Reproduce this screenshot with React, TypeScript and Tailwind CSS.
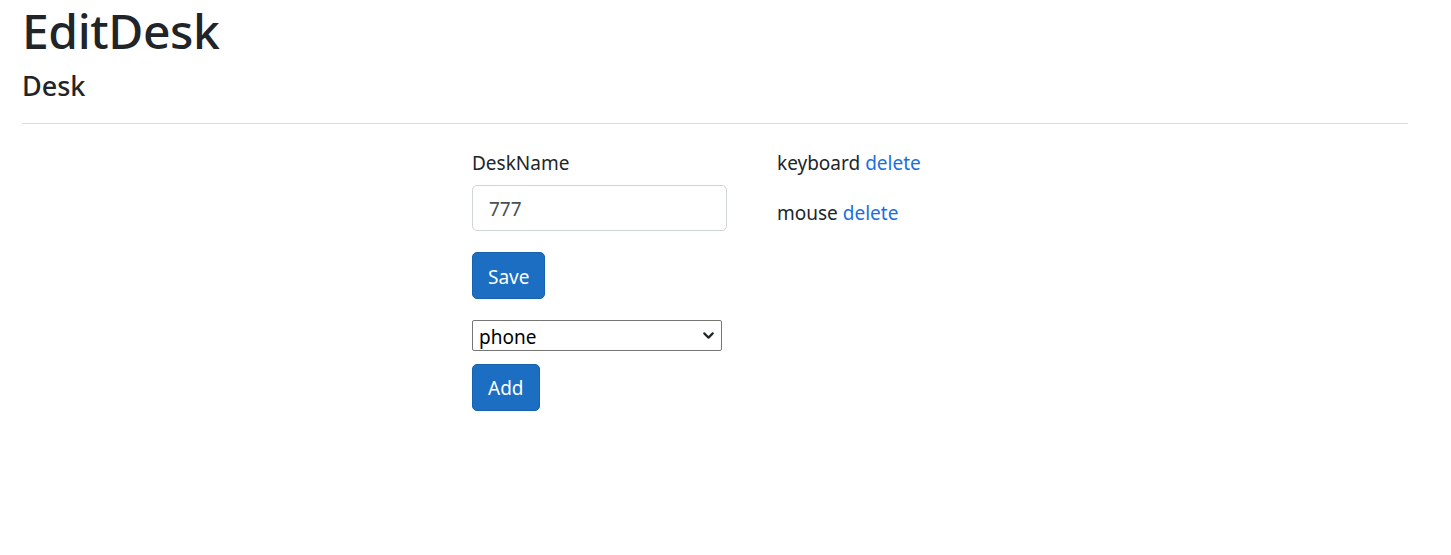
import { ChevronDown } from 'lucide-react';

export default function App() {
  const items = ['keyboard', 'mouse'];

  return (
    <div className="min-h-[555px] bg-white text-[#212529] font-['Noto_Sans',sans-serif]">
      <div className="pl-[22px] pt-[2px] w-[1408px]">
        {/* Header */}
        <h1 className="text-[48px] font-medium leading-[58px] tracking-[-0.4px]">EditDesk</h1>
        <h4 className="mt-[9px] text-[27px] font-medium leading-[34px]">Desk</h4>
        <hr className="mt-[20px] border-t border-[#dcdcdc]" />

        <div className="flex mt-[21px] pl-[450px]">
          {/* Form column */}
          <div className="w-[305px] flex flex-col items-start">
            <label className="text-[19px] leading-[34px] pt-[1px]">DeskName</label>
            <input
              defaultValue="777"
              className="mt-[5px] w-[255px] h-[46px] rounded-[5px] border border-[#ced4da] px-[16px] pt-[2px] text-[19px] text-[#495057] outline-none"
            />
            <button className="mt-[21px] h-[47px] pt-[3px] px-[15px] rounded-[5px] bg-[#1b6ec2] border border-[#1861ac] text-white text-[19px]">
              Save
            </button>
            <div className="relative mt-[21px] w-[250px] h-[31px] border border-[#767676] rounded-[2px] flex items-center pl-[6px] pt-[3px]">
              <span className="text-[19px] text-black leading-none">phone</span>
              <ChevronDown className="absolute right-[4px] top-[6px] w-[17px] h-[17px]" strokeWidth={3} />
            </div>
            <button className="mt-[13px] h-[47px] pt-[2px] px-[15px] rounded-[5px] bg-[#1b6ec2] border border-[#1861ac] text-white text-[19px]">
              Add
            </button>
          </div>

          {/* Items column */}
          <div className="flex flex-col gap-[16px] pt-[1px]">
            {items.map((item) => (
              <div key={item} className="text-[19px] leading-[34px]">
                {item} <a href="#" className="text-[#1a6fe0]">delete</a>
              </div>
            ))}
          </div>
        </div>
      </div>
    </div>
  );
}
